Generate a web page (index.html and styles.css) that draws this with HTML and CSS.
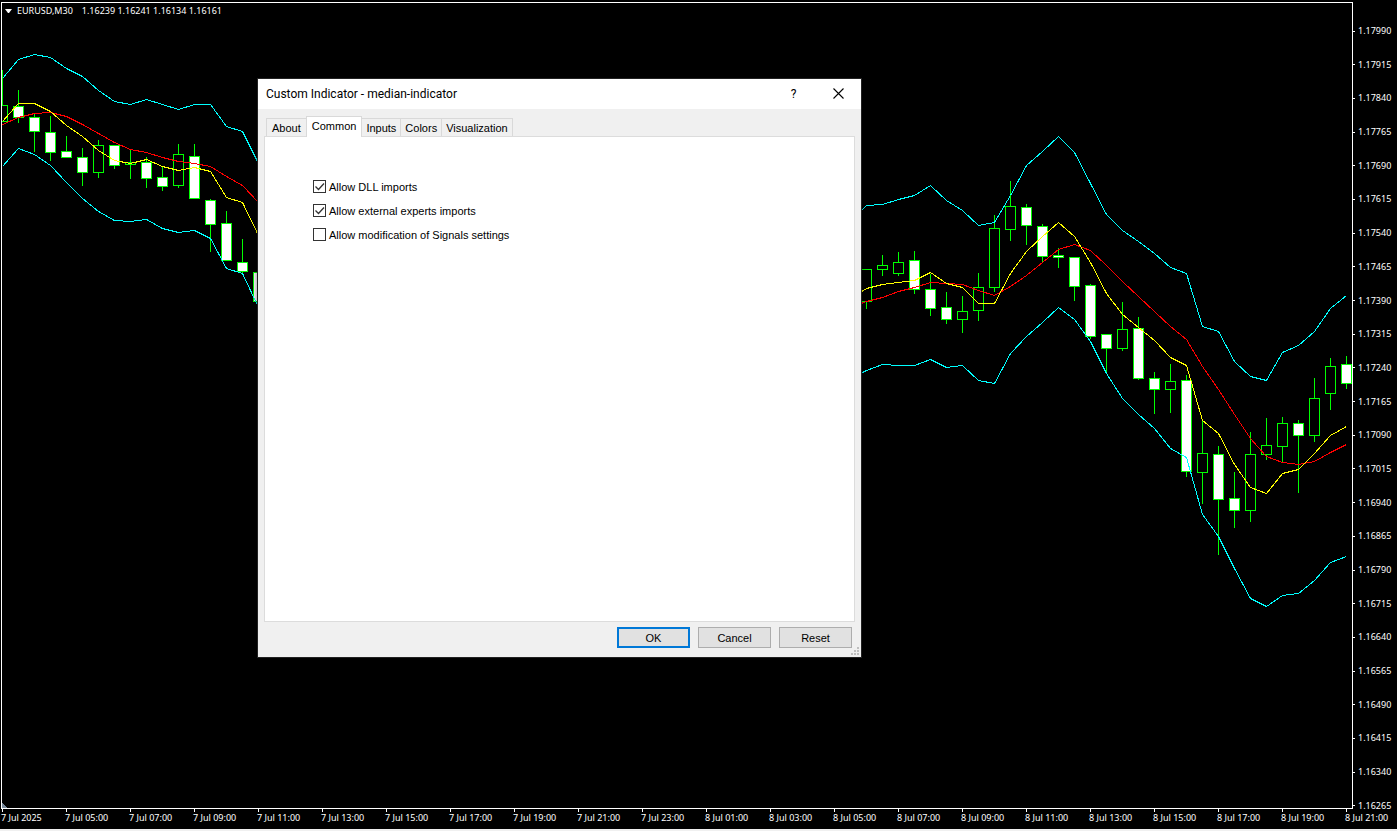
FILE: index.html
```html
<!DOCTYPE html>
<html lang="en">
<head>
    <meta charset="UTF-8" />
    <meta name="viewport" content="width=device-width, initial-scale=1" />
    <title>EURUSD,M30</title>
    <link rel="stylesheet" href="styles.css">
</head>
<body>
    <main class="chart">
        <section class="plot">
            <h1 class="symbol">
                <svg class="arrow" width="7" height="4" viewBox="0 0 7 4" aria-hidden="true"><path d="M0 0h7L4 4H3z" fill="#fff" /></svg>
                <span>EURUSD,M30</span>
                <span>1.16239 1.16241 1.16134 1.16161</span>
            </h1>
            <svg class="candles" id="candles" viewBox="2 3 1350 805" preserveAspectRatio="none" role="img" aria-label="EURUSD candles with bands"></svg>
        </section>
        <ol class="prices" id="prices"></ol>
        <ol class="times" id="times"></ol>
    </main>

    <div class="dialog" role="dialog" aria-labelledby="dialogTitle">
        <header class="titlebar">
            <h2 id="dialogTitle">Custom Indicator - median-indicator</h2>
            <button type="button" class="title-btn" aria-label="Help">?</button>
            <button type="button" class="title-btn" aria-label="Close">
                <svg width="11" height="11" viewBox="0 0 11 11" aria-hidden="true"><path d="M.5 .5l10 10M10.5 .5l-10 10" stroke="#000" stroke-width="1.1" /></svg>
            </button>
        </header>
        <div class="tabs" role="tablist">
            <button type="button" class="tab" role="tab">About</button>
            <button type="button" class="tab active" role="tab" aria-selected="true">Common</button>
            <button type="button" class="tab" role="tab">Inputs</button>
            <button type="button" class="tab" role="tab">Colors</button>
            <button type="button" class="tab" role="tab">Visualization</button>
        </div>
        <form class="panel" id="options">
            <div class="option">
                <input type="checkbox" id="dll" checked />
                <label for="dll">Allow DLL imports</label>
            </div>
            <div class="option">
                <input type="checkbox" id="experts" checked />
                <label for="experts">Allow external experts imports</label>
            </div>
            <div class="option">
                <input type="checkbox" id="signals" />
                <label for="signals">Allow modification of Signals settings</label>
            </div>
        </form>
        <footer class="actions">
            <button type="button" class="btn primary">OK</button>
            <button type="button" class="btn">Cancel</button>
            <button type="reset" form="options" class="btn">Reset</button>
        </footer>
        <svg class="grip" width="8" height="8" viewBox="0 0 8 8" aria-hidden="true">
            <path d="M6 0h2v2H6zM3 3h2v2H3zM6 3h2v2H6zM0 6h2v2H0zM3 6h2v2H3zM6 6h2v2H6z" fill="#bfbfbf" />
        </svg>
    </div>

    <script src="chart.js"></script>
</body>
</html>
```

FILE: styles.css
```css
* {
    box-sizing: border-box;
}
body {
    margin: 0;
    background: #000;
    color: #fff;
    font-family: "Noto Sans", sans-serif;
    font-size: 9px;
    line-height: 12px;
}
h1, h2, ol {
    margin: 0;
    padding: 0;
    font-size: inherit;
    font-weight: normal;
    list-style: none;
}
button {
    font: inherit;
    color: inherit;
    padding: 0;
}

/* chart */
.chart {
    display: grid;
    grid-template-columns: minmax(0, 1fr) 44px;
    grid-template-rows: minmax(0, 1fr) 20px;
    height: 100vh;
    padding: 2px 0 0 1px;
    border-bottom: 2px solid #f0f0f0;
}
.plot {
    position: relative;
    border: 1px solid #fff;
}
.symbol {
    position: absolute;
    top: 2px;
    left: 3px;
    display: flex;
    align-items: center;
    gap: 5px;
}
.symbol span + span {
    margin-left: 4px;
}
.candles {
    display: block;
    width: 100%;
    height: 100%;
    shape-rendering: crispEdges;
}
.prices {
    grid-column: 2;
    grid-row: 1 / 3;
    display: flex;
    flex-direction: column;
    justify-content: space-between;
    padding: 23px 0 17px;
}
.prices li {
    display: flex;
    align-items: center;
    gap: 3px;
}
.prices li::before {
    content: "";
    width: 2px;
    height: 1px;
    background: #fff;
}
.times {
    grid-column: 1;
    grid-row: 2;
    display: flex;
}
.times li {
    flex: 0 0 64px;
    white-space: nowrap;
}
.times li::before {
    content: "";
    display: block;
    width: 1px;
    height: 3px;
    margin-left: 1px;
    background: #fff;
}

/* indicator window */
.dialog {
    position: absolute;
    top: 79px;
    left: 258px;
    display: flex;
    flex-direction: column;
    width: 603px;
    height: 578px;
    background: #f0f0f0;
    color: #000;
    font-family: "Liberation Sans", Arial, sans-serif;
    font-size: 11px;
    box-shadow: 0 0 0 1px #222, 0 0 6px 1px rgba(0, 0, 0, 0.5);
}
.titlebar {
    display: flex;
    align-items: center;
    height: 30px;
    padding-left: 8px;
    background: #fff;
    font-family: Roboto, sans-serif;
    font-size: 12px;
}
.titlebar h2 {
    flex: 1;
}
.title-btn {
    display: flex;
    align-items: center;
    justify-content: center;
    width: 45px;
    height: 30px;
    padding-bottom: 1px;
    border: none;
    background: none;
}
.tabs {
    display: flex;
    align-items: flex-end;
    padding: 7px 8px 0;
}
.tab {
    height: 18px;
    padding: 1px 4px 0;
    margin-right: -1px;
    border: 1px solid #d9d9d9;
    border-bottom: none;
    background: #f0f0f0;
}
.tab.active {
    position: relative;
    height: 21px;
    padding: 0 5px 2px;
    margin-bottom: -1px;
    background: #fff;
}
.tab:first-child {
    padding: 1px 5px 0;
}
.panel {
    flex: 1;
    margin: 0 6px;
    padding: 43px 48px;
    border: 1px solid #dcdcdc;
    background: #fff;
}
.option {
    display: flex;
    align-items: center;
    gap: 3px;
    height: 13px;
    margin-bottom: 11px;
}
.option input {
    appearance: none;
    width: 13px;
    height: 13px;
    margin: 0;
    border: 1px solid #333;
    background: #fff;
}
.option input:checked {
    background: url("data:image/svg+xml,%3Csvg xmlns='http://www.w3.org/2000/svg' viewBox='0 0 11 11'%3E%3Cpath d='M1.5 5.5l3 3 5.5-6' fill='none' stroke='%23333' stroke-width='1.3'/%3E%3C/svg%3E");
}
.actions {
    display: flex;
    justify-content: flex-end;
    gap: 8px;
    padding: 5px 9px 9px;
}
.btn {
    width: 73px;
    height: 21px;
    border: 1px solid #adadad;
    background: #e1e1e1;
}
.btn.primary {
    border: 2px solid #0078d7;
}
.grip {
    position: absolute;
    right: 2px;
    bottom: 2px;
}
```

FILE: chart.js
```javascript
const STEP = 16;
const ORIGIN = 2;

// [bar, high, low, body top, body bottom, falling]
const bars = [
    [0, 70, 121, 105, 121, 0], [1, 90, 122, 106, 117, 1], [2, 114, 151, 117, 131, 1],
    [3, 116, 160, 132, 152, 1], [4, 136, 157, 151, 157, 1], [5, 148, 185, 157, 172, 1],
    [6, 140, 177, 145, 172, 0], [7, 145, 168, 145, 165, 1], [8, 149, 178, 162, 164, 0],
    [9, 157, 187, 162, 178, 1], [10, 166, 190, 177, 186, 1], [11, 144, 187, 154, 185, 0],
    [12, 144, 198, 156, 198, 1], [13, 199, 251, 200, 224, 1], [14, 211, 260, 223, 260, 1],
    [15, 239, 274, 262, 271, 1], [16, 272, 301, 272, 301, 1],
    [54, 269, 308, 269, 301, 0], [55, 255, 275, 265, 269, 0], [56, 252, 275, 262, 273, 0],
    [57, 251, 293, 260, 289, 1], [58, 274, 315, 289, 308, 1], [59, 292, 323, 307, 319, 1],
    [60, 296, 332, 311, 319, 0], [61, 273, 320, 287, 310, 0], [62, 215, 291, 228, 287, 0],
    [63, 181, 240, 206, 229, 0], [64, 204, 244, 207, 225, 1], [65, 224, 262, 226, 256, 1],
    [66, 248, 267, 255, 257, 1], [67, 257, 300, 257, 286, 1], [68, 284, 338, 285, 336, 1],
    [69, 334, 371, 334, 348, 1], [70, 302, 350, 329, 348, 0], [71, 317, 379, 328, 378, 1],
    [72, 372, 413, 378, 389, 1], [73, 364, 412, 381, 389, 0], [74, 375, 476, 380, 471, 1],
    [75, 421, 503, 453, 472, 0], [76, 446, 554, 454, 499, 1], [77, 472, 527, 498, 510, 1],
    [78, 432, 521, 454, 510, 0], [79, 418, 459, 445, 454, 0], [80, 417, 462, 423, 446, 0],
    [81, 420, 492, 423, 435, 1], [82, 378, 441, 398, 435, 0], [83, 358, 409, 366, 393, 0],
    [84, 356, 388, 364, 383, 1]
];

// each line: colour, first bar, y values
const lines = [
    ['#0ff', 0, [78, 59, 54, 57, 68, 76, 90, 101, 104, 99, 104, 109, 104, 104, 126, 131, 163]],
    ['#0ff', 0, [166, 148, 154, 165, 182, 198, 211, 220, 221, 219, 228, 232, 230, 238, 268, 273, 307]],
    ['#f00', 0, [124, 117, 113, 112, 116, 124, 133, 142, 149, 152, 157, 161, 163, 166, 176, 185, 202]],
    ['#ff0', 0, [121, 103, 103, 111, 125, 136, 150, 160, 163, 159, 166, 170, 167, 171, 197, 202, 235]],
    ['#0ff', 53, [221, 205, 204, 199, 195, 185, 200, 210, 225, 222, 195, 165, 151, 136, 152, 183, 214, 230, 241, 253, 267, 273, 326, 331, 361, 376, 380, 352, 345, 331, 308, 295]],
    ['#0ff', 53, [378, 370, 364, 365, 365, 359, 367, 365, 380, 383, 353, 336, 322, 307, 319, 341, 373, 398, 414, 428, 448, 457, 514, 536, 568, 598, 606, 595, 593, 580, 562, 556]],
    ['#f00', 53, [307, 301, 297, 291, 287, 282, 283, 284, 290, 295, 286, 275, 262, 249, 244, 250, 265, 281, 296, 311, 326, 339, 366, 389, 414, 438, 456, 462, 464, 461, 452, 444]],
    ['#ff0', 53, [298, 288, 284, 282, 280, 272, 283, 287, 303, 303, 273, 251, 236, 222, 236, 262, 293, 314, 327, 340, 357, 365, 420, 433, 464, 487, 493, 473, 469, 453, 435, 426]]
];

let shapes = '';
bars.forEach(([i, high, low, top, bottom, falling]) => {
    const x = ORIGIN + i * STEP;
    shapes += `<path d="M${x} ${high}h1V${low + 1}h-1z" fill="#0f0"/>`;
    shapes += `<rect x="${x - 5}" y="${top}" width="11" height="${bottom - top + 1}" fill="#0f0"/>`;
    shapes += `<rect x="${x - 4}" y="${top + 1}" width="9" height="${bottom - top - 1}" fill="${falling ? '#fff' : '#000'}"/>`;
});
lines.forEach(([color, first, ys]) => {
    const points = ys.map((y, n) => `${ORIGIN + (first + n) * STEP + 0.5},${y + 0.5}`).join(' ');
    shapes += `<polyline points="${points}" fill="none" stroke="${color}"/>`;
});
// scroll marker in the bottom left corner
shapes += '<path d="M2 803l5 5h-5z" fill="#778899"/>';
document.getElementById('candles').innerHTML = shapes;

let prices = '';
for (let p = 117990; p >= 116265; p -= 75) {
    prices += `<li>${(p / 100000).toFixed(5)}</li>`;
}
document.getElementById('prices').innerHTML = prices;

let times = '<li>7 Jul 2025</li>';
for (let h = 5; h <= 45; h += 2) {
    const day = h < 24 ? 7 : 8;
    times += `<li>${day} Jul ${String(h % 24).padStart(2, '0')}:00</li>`;
}
document.getElementById('times').innerHTML = times;
```
